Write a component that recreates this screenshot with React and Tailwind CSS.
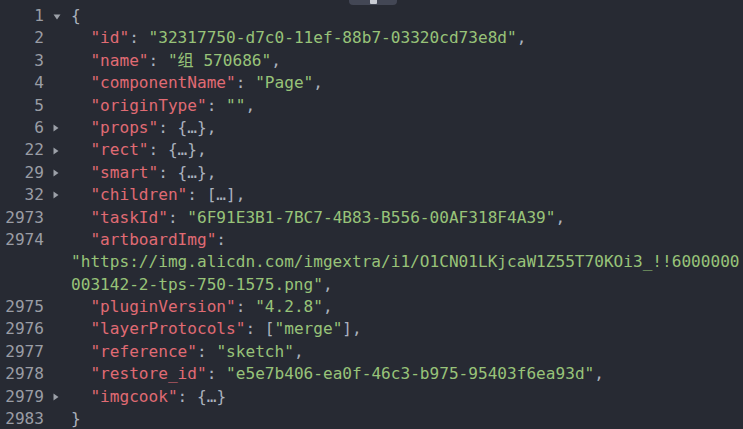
import React from 'react';

const K = ({ children }) => <span className="text-[#e06b74]">{children}</span>;
const S = ({ children }) => <span className="text-[#98c379]">{children}</span>;
const P = ({ children }) => <span className="text-[#abb2bf]">{children}</span>;

// each row: [lineNumber, arrow, content]
const rows = [
  ['1', 'down', <P>{'{'}</P>],
  ['2', null, <>{'  '}<K>"id"</K><P>: </P><S>"32317750-d7c0-11ef-88b7-03320cd73e8d"</S><P>,</P></>],
  ['3', null, <>{'  '}<K>"name"</K><P>: </P><S>"组 570686"</S><P>,</P></>],
  ['4', null, <>{'  '}<K>"componentName"</K><P>: </P><S>"Page"</S><P>,</P></>],
  ['5', null, <>{'  '}<K>"originType"</K><P>: </P><S>""</S><P>,</P></>],
  ['6', 'right', <>{'  '}<K>"props"</K><P>: {'{…},'}</P></>],
  ['22', 'right', <>{'  '}<K>"rect"</K><P>: {'{…},'}</P></>],
  ['29', 'right', <>{'  '}<K>"smart"</K><P>: {'{…},'}</P></>],
  ['32', 'right', <>{'  '}<K>"children"</K><P>: […],</P></>],
  ['2973', null, <>{'  '}<K>"taskId"</K><P>: </P><S>"6F91E3B1-7BC7-4B83-B556-00AF318F4A39"</S><P>,</P></>],
  ['2974', null, <>{'  '}<K>"artboardImg"</K><P>:</P></>],
  ['', null, <S>"https://img.alicdn.com/imgextra/i1/O1CN01LKjcaW1Z55T70KOi3_!!6000000</S>],
  ['', null, <><S>003142-2-tps-750-1575.png"</S><P>,</P></>],
  ['2975', null, <>{'  '}<K>"pluginVersion"</K><P>: </P><S>"4.2.8"</S><P>,</P></>],
  ['2976', null, <>{'  '}<K>"layerProtocols"</K><P>: [</P><S>"merge"</S><P>],</P></>],
  ['2977', null, <>{'  '}<K>"reference"</K><P>: </P><S>"sketch"</S><P>,</P></>],
  ['2978', null, <>{'  '}<K>"restore_id"</K><P>: </P><S>"e5e7b406-ea0f-46c3-b975-95403f6ea93d"</S><P>,</P></>],
  ['2979', 'right', <>{'  '}<K>"imgcook"</K><P>: {'{…}'}</P></>],
  ['2983', null, <P>{'}'}</P>],
];

const Arrow = ({ dir }) => {
  if (dir === 'down') {
    return (
      <svg width="8" height="6" viewBox="0 0 8 6" className="mt-[1px]">
        <path d="M0.5 0.5 L7.5 0.5 L4 5.5 Z" fill="#9ca0a8" />
      </svg>
    );
  }
  return (
    <svg width="6" height="8" viewBox="0 0 6 8">
      <path d="M0.5 0.5 L5.5 4 L0.5 7.5 Z" fill="#9ca0a8" />
    </svg>
  );
};

export default function App() {
  return (
    <div className="relative w-[743px] h-[429px] overflow-hidden bg-[#272a33] pt-[5px]" style={{ fontFamily: '"DejaVu Sans Mono", "Noto Sans CJK SC", monospace' }}>
      {/* scroll-to-top handle */}
      <div className="absolute left-[349px] top-0 w-[48px] h-[5px] rounded-b-[4px] bg-[#434755] flex justify-center">
        <div className="w-[7px] h-[4px] bg-[#c9ccd4] rounded-b-[1px]" />
      </div>

      <div className="flex flex-col text-[16.1px] leading-[22.4px]">
        {rows.map(([num, arrow, content], i) => (
          <div key={i} className="flex items-center h-[22.4px]">
            <div className="w-[44px] shrink-0 text-right text-[#9a9da5]">{num}</div>
            <div className="w-[27px] shrink-0 flex items-center pl-[9px]">
              {arrow && <Arrow dir={arrow} />}
            </div>
            <div className="whitespace-pre text-[#abb2bf]">{content}</div>
          </div>
        ))}
      </div>
    </div>
  );
}
